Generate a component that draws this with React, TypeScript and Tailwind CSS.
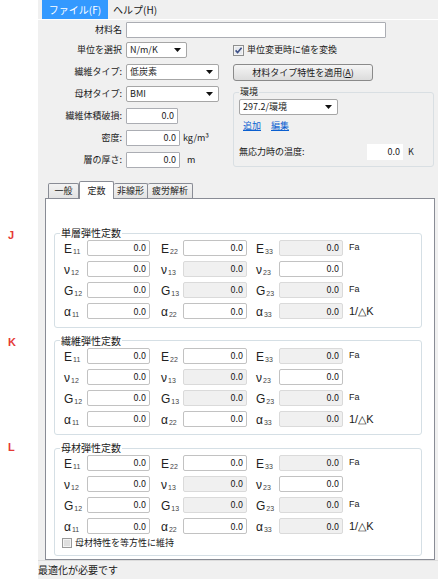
import React from "react";

type Cell = { sym: string; sub: string; disabled?: boolean };
type Row = { cells: Cell[]; unit?: string; big?: boolean };

const rows: Row[] = [
    {
        cells: [
            { sym: "E", sub: "11" },
            { sym: "E", sub: "22" },
            { sym: "E", sub: "33", disabled: true },
        ],
        unit: "Fa",
    },
    {
        cells: [
            { sym: "ν", sub: "12" },
            { sym: "ν", sub: "13", disabled: true },
            { sym: "ν", sub: "23" },
        ],
    },
    {
        cells: [
            { sym: "G", sub: "12" },
            { sym: "G", sub: "13", disabled: true },
            { sym: "G", sub: "23", disabled: true },
        ],
        unit: "Fa",
    },
    {
        cells: [
            { sym: "α", sub: "11" },
            { sym: "α", sub: "22" },
            { sym: "α", sub: "33", disabled: true },
        ],
        unit: "1/△K",
        big: true,
    },
];

const labelCols = ["w-[23px]", "w-[33px] pl-[11px]", "w-[32px] pl-[9px]"];
const inputCols = ["w-[63px]", "w-[64px]", "w-[64px]"];

function Arrow() {
    return (
        <svg width="7" height="4" viewBox="0 0 7 4">
            <path d="M0 0h7L3.5 4z" fill="#111" />
        </svg>
    );
}

function Select({ value, className }: { value: string; className: string }) {
    return (
        <div
            className={`${className} h-[16px] flex items-center justify-between bg-white border border-[#a6a6a6] rounded-[2px] pl-[3px] pr-[5px]`}
        >
            <span>{value}</span>
            <Arrow />
        </div>
    );
}

function TextBox({ className, value }: { className: string; value?: string }) {
    return (
        <div
            className={`${className} h-[16px] flex items-center justify-end bg-white border border-[#abadb3] rounded-[1px] pr-[3px]`}
        >
            {value}
        </div>
    );
}

function Field({ cell, col }: { cell: Cell; col: number }) {
    return (
        <>
            <div className={`${labelCols[col]} flex items-end h-[16px]`}>
                <span className="font-['Liberation_Sans',sans-serif] text-[12px] leading-[14px] text-[#222]">
                    {cell.sym}
                </span>
                <span className="font-['Liberation_Sans',sans-serif] text-[7px] leading-[9px] ml-[1px] text-[#444]">
                    {cell.sub}
                </span>
            </div>
            <div
                className={`${inputCols[col]} h-[16px] flex items-center justify-end pr-[3px] rounded-[2px] border ${
                    cell.disabled ? "bg-[#f0f0f0] border-[#dadada]" : "bg-white border-[#c2c2c2]"
                }`}
            >
                0.0
            </div>
        </>
    );
}

function Group({ title, children }: { title: string; children?: React.ReactNode }) {
    return (
        <fieldset className="border border-[#d5dfe5] rounded-[3px] pb-[7px] w-[368px]">
            <legend className="ml-[5px] px-[1px] leading-[14px] text-[10px]">{title}</legend>
            <div className="flex flex-col gap-[5px]">
                {rows.map((row, i) => (
                    <div key={i} className="flex items-center pl-[9px]">
                        {row.cells.map((c, j) => (
                            <Field key={j} cell={c} col={j} />
                        ))}
                        {row.unit && (
                            <span
                                className={`ml-[6px] font-['Liberation_Sans',sans-serif] ${
                                    row.big ? "text-[11px]" : "text-[9px]"
                                }`}
                            >
                                {row.unit}
                            </span>
                        )}
                    </div>
                ))}
            </div>
            {children}
        </fieldset>
    );
}

function CheckedBox() {
    return (
        <svg width="11" height="11" viewBox="0 0 11 11">
            <rect x="0.5" y="0.5" width="10" height="10" fill="#f4f4f4" stroke="#8e8f8f" />
            <rect x="2" y="2" width="7" height="7" fill="#e6e9ee" />
            <path d="M2.6 5.4l2 2.2L8.6 2.8" fill="none" stroke="#3d4f86" strokeWidth="1.6" />
        </svg>
    );
}

function EmptyBox() {
    return (
        <svg width="10" height="10" viewBox="0 0 10 10">
            <rect x="0.5" y="0.5" width="9" height="9" fill="#f4f4f4" stroke="#9a9a9a" />
            <rect x="2" y="2" width="6" height="6" fill="#dfdfdf" />
        </svg>
    );
}

export default function App() {
    const labels = "w-[84px] text-right shrink-0";
    return (
        <div className="flex w-[438px] h-[579px] bg-white text-[9px] text-[#1a1a1a] font-['Noto_Sans_CJK_JP',sans-serif] overflow-hidden">
            <div className="w-[38px] shrink-0 flex flex-col pl-[8px] font-['Liberation_Sans',sans-serif] font-bold text-[11px] text-[#e53935]">
                <span className="mt-[228px] leading-[14px]">J</span>
                <span className="mt-[93px] leading-[14px]">K</span>
                <span className="mt-[91px] leading-[14px]">L</span>
            </div>

            <div className="w-[400px] h-full flex flex-col bg-[#f0f0f0]">
                {/* menu */}
                <div className="h-[21px] flex items-start pl-[4px] border-b border-white text-[10px]">
                    <div className="h-[19px] w-[66px] bg-[#3399ff] text-white flex items-center justify-center">
                        ファイル(F)
                    </div>
                    <div className="h-[19px] flex items-center px-[5px]">ヘルプ(H)</div>
                </div>

                {/* form */}
                <div className="flex items-center mt-[2px] h-[16px]">
                    <span className={labels}>材料名</span>
                    <TextBox className="ml-[4px] w-[260px]" />
                </div>
                <div className="flex mt-[4px]">
                    <div className="w-[181px] flex flex-col gap-[6px]">
                        <div className="flex items-center h-[16px]">
                            <span className={labels}>単位を選択</span>
                            <Select className="ml-[4px] w-[61px]" value="N/m/K" />
                        </div>
                        <div className="flex items-center h-[16px]">
                            <span className={labels}>繊維タイプ:</span>
                            <Select className="ml-[4px] w-[93px]" value="低炭素" />
                        </div>
                        <div className="flex items-center h-[16px]">
                            <span className={labels}>母材タイプ:</span>
                            <Select className="ml-[4px] w-[93px]" value="BMI" />
                        </div>
                        <div className="flex items-center h-[16px]">
                            <span className={labels}>繊維体積破損:</span>
                            <TextBox className="ml-[4px] w-[52px]" value="0.0" />
                        </div>
                        <div className="flex items-center h-[16px]">
                            <span className={labels}>密度:</span>
                            <TextBox className="ml-[4px] w-[54px]" value="0.0" />
                            <span className="ml-[3px]">kg/m³</span>
                        </div>
                        <div className="flex items-center h-[16px]">
                            <span className={labels}>層の厚さ:</span>
                            <TextBox className="ml-[4px] w-[54px]" value="0.0" />
                            <span className="ml-[7px]">m</span>
                        </div>
                    </div>

                    <div className="ml-[14px] w-[201px] flex flex-col">
                        <div className="flex items-center h-[16px]">
                            <CheckedBox />
                            <span className="ml-[3px]">単位変更時に値を変換</span>
                        </div>
                        <button className="mt-[6px] w-[140px] h-[17px] rounded-[3px] border border-[#8a8a8a] bg-gradient-to-b from-[#f5f5f5] to-[#dcdcdc] text-[9px]">
                            材料タイプ特性を適用(<span className="underline">A</span>)
                        </button>
                        <fieldset className="mt-[5px] border border-[#d9dfe3] rounded-[3px] pl-[5px] pb-[6px]">
                            <legend className="leading-[12px] px-[1px]">環境</legend>
                            <Select className="w-[99px] mt-[1px]" value="297.2/環境" />
                            <div className="flex items-center h-[14px] mt-[4px] pl-[4px] gap-[10px] text-[#0a5fd0] underline">
                                <span>追加</span>
                                <span>編集</span>
                            </div>
                            <div className="flex items-center h-[16px] mt-[11px]">
                                <span className="w-[128px]">無応力時の温度:</span>
                                <div className="w-[36px] h-[16px] bg-white flex items-center justify-end pr-[3px]">
                                    0.0
                                </div>
                                <span className="ml-[5px]">K</span>
                            </div>
                        </fieldset>
                    </div>
                </div>

                {/* tabs */}
                <div className="mt-[13px] ml-[10px] h-[17px] flex items-end relative z-10">
                    <div className="w-[31px] h-[15px] flex items-center justify-center border border-b-0 border-[#898c95] rounded-t-[2px] bg-gradient-to-b from-[#f3f3f3] to-[#e3e3e3]">
                        一般
                    </div>
                    <div className="w-[35px] h-[18px] -mb-px flex items-center justify-center border border-b-0 border-[#898c95] rounded-t-[2px] bg-white">
                        定数
                    </div>
                    <div className="w-[34px] h-[15px] flex items-center justify-center border border-l-0 border-b-0 border-[#898c95] rounded-t-[2px] bg-gradient-to-b from-[#f3f3f3] to-[#e3e3e3]">
                        非線形
                    </div>
                    <div className="w-[45px] h-[15px] flex items-center justify-center border border-l-0 border-b-0 border-[#898c95] rounded-t-[2px] bg-gradient-to-b from-[#f3f3f3] to-[#e3e3e3]">
                        疲労解析
                    </div>
                </div>
                <div className="ml-[7px] w-[390px] bg-white border border-[#898c95] pt-[27px] pl-[8px] pb-[3px] flex flex-col gap-[6px]">
                    <Group title="単層弾性定数" />
                    <Group title="繊維弾性定数" />
                    <Group title="母材弾性定数">
                        <div className="flex items-center h-[10px] mt-[3px] pl-[7px]">
                            <EmptyBox />
                            <span className="ml-[3px]">母材特性を等方性に維持</span>
                        </div>
                    </Group>
                </div>

                {/* status */}
                <div className="mt-auto h-[20px] border-t border-[#dcdcdc] flex items-start pt-[1px] text-[10px]">
                    最適化が必要です
                </div>
            </div>
        </div>
    );
}
